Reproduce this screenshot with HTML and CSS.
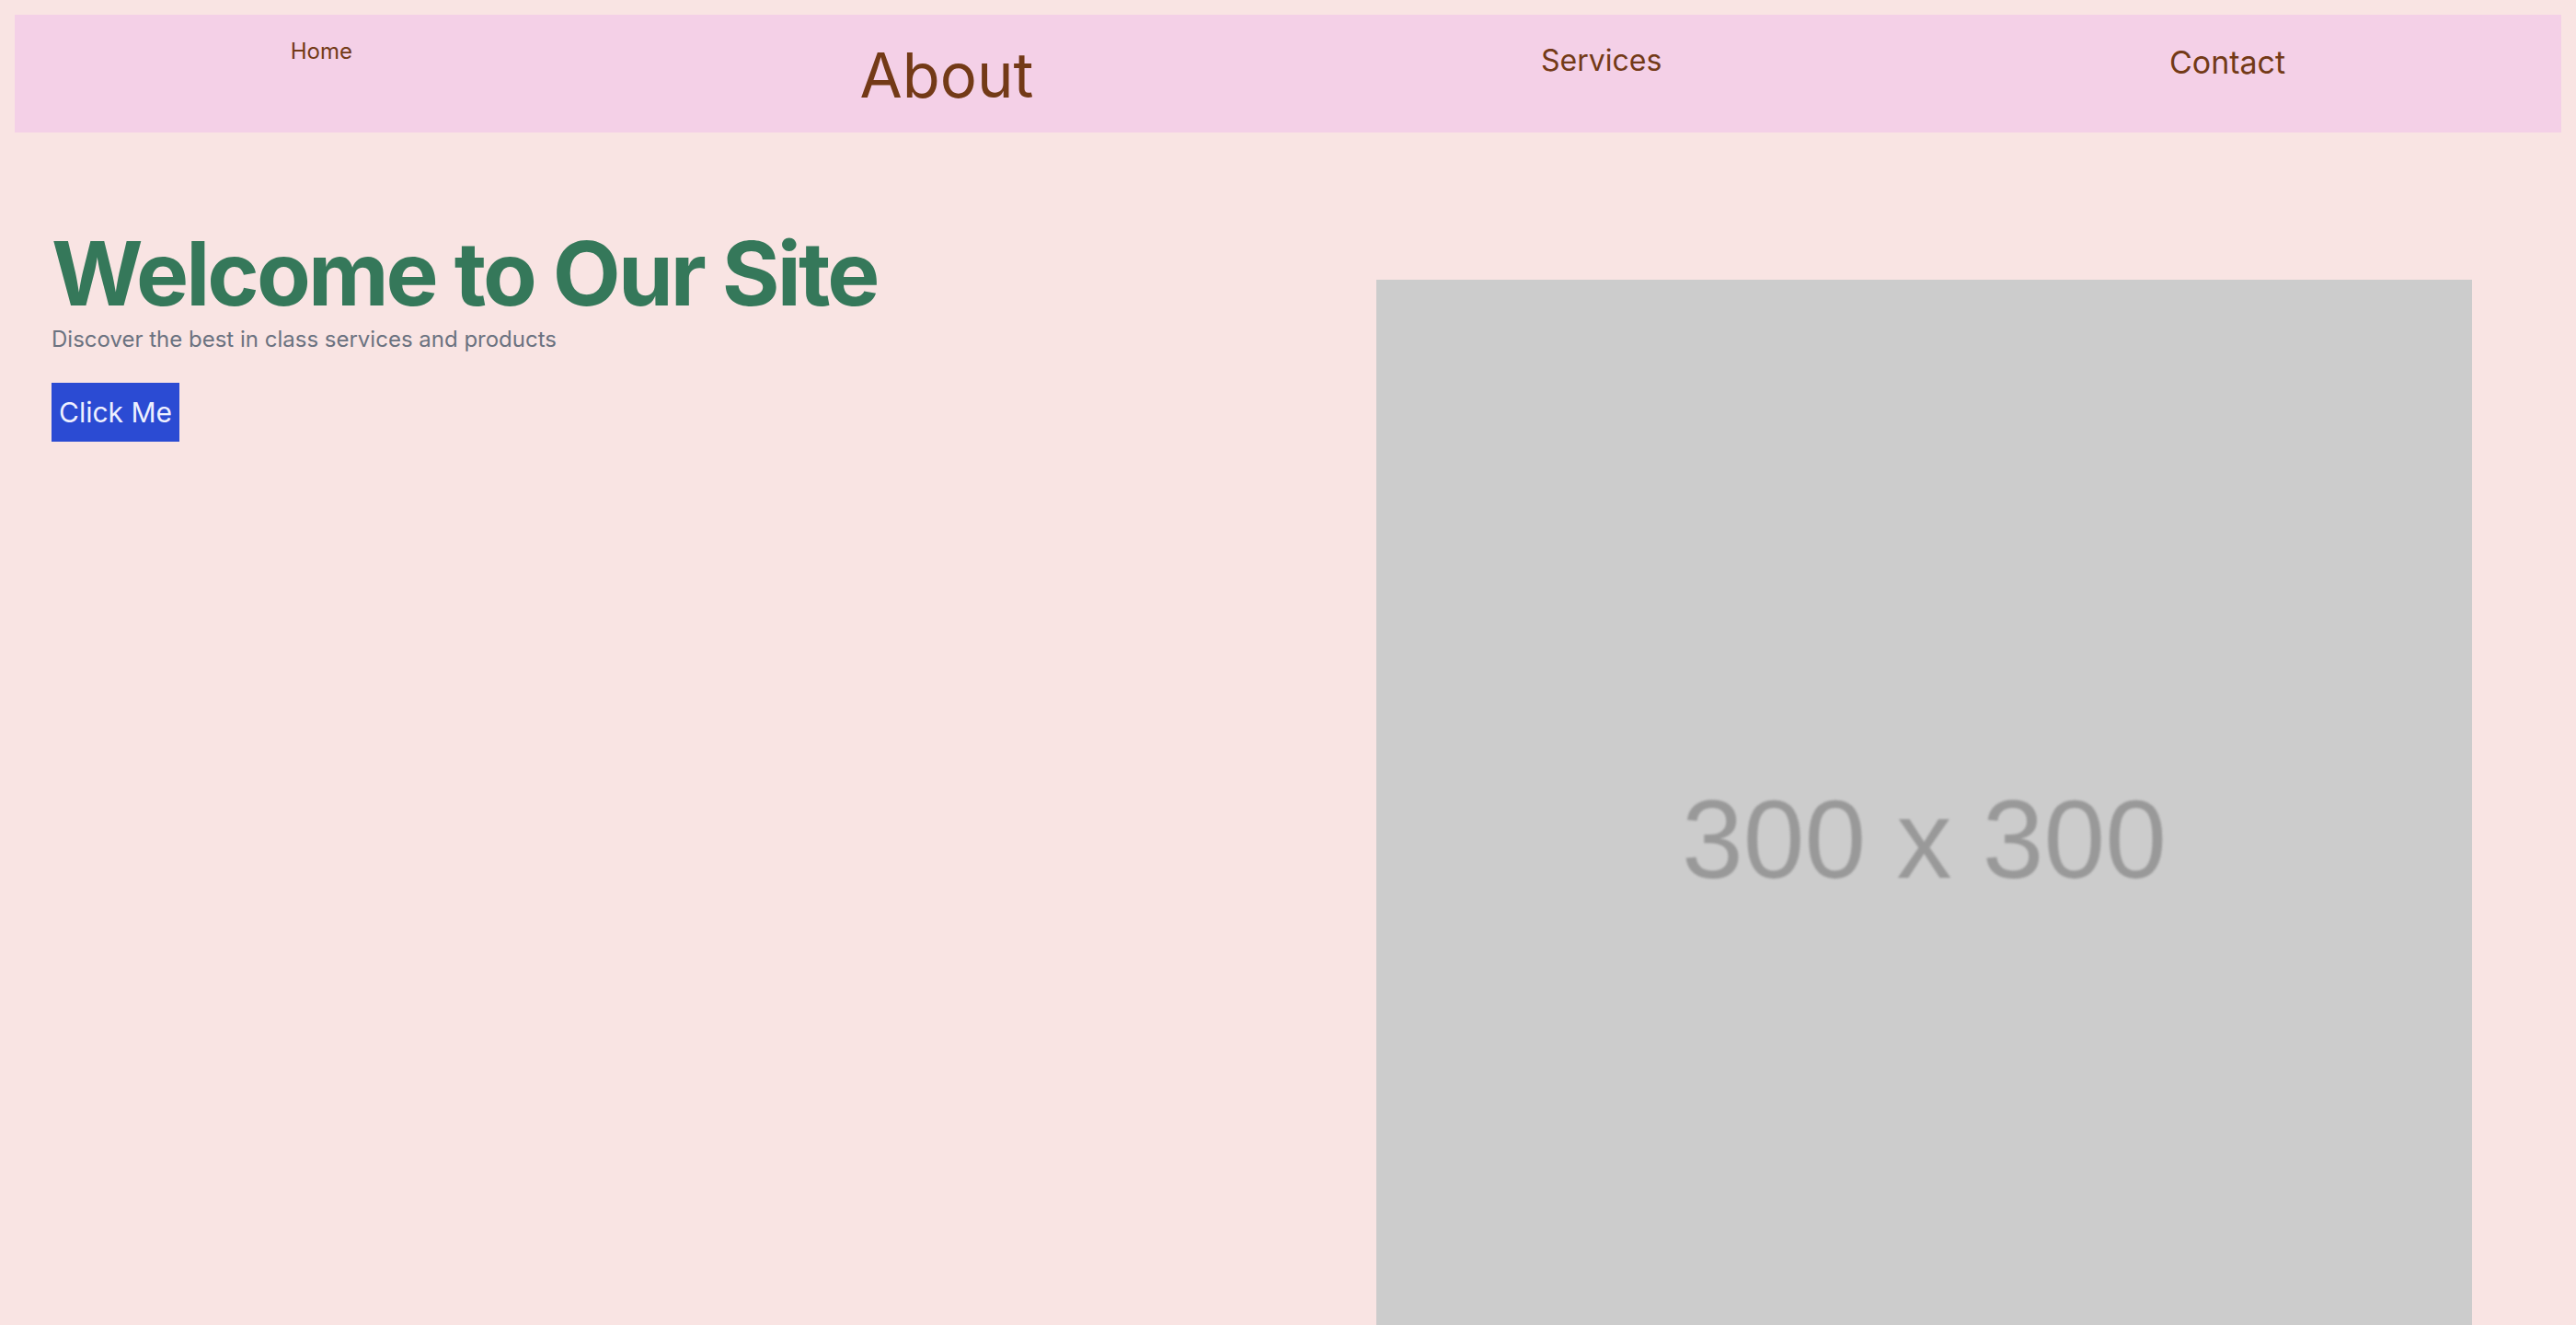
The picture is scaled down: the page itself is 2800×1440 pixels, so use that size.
FILE: index.html
```html
<!DOCTYPE html>
<html lang="en">
<head>
<meta charset="utf-8">
<title>Welcome</title>
<link rel="stylesheet" href="styles.css">
</head>
<body>
  <nav class="nav">
    <a class="nav-link nav-home" href="#">Home</a>
    <a class="nav-link nav-about" href="#">About</a>
    <a class="nav-link nav-services" href="#">Services</a>
    <a class="nav-link nav-contact" href="#">Contact</a>
  </nav>
  <main class="hero">
    <div class="hero-text">
      <h1 class="hero-title">Welcome to Our Site</h1>
      <p class="hero-sub">Discover the best in class services and products</p>
      <button class="hero-btn" type="button">Click Me</button>
    </div>
    <div class="hero-image">
      <span class="hero-image-label">300 x 300</span>
    </div>
  </main>
</body>
</html>
```

FILE: styles.css
```css
html, body {
  background: #f9e4e3;
}
body {
  margin: 16px;
  font-family: Inter, "Noto Sans", sans-serif;
}
.nav {
  display: flex;
  justify-content: space-around;
  align-items: flex-start;
  height: 128px;
  padding: 0 24px;
  background: #f4d0e7;
  box-sizing: border-box;
}
.nav-link {
  color: #733a17;
  text-decoration: none;
  line-height: 1.21;
}
.nav-home {
  font-size: 24px;
  padding-top: 25px;
}
.nav-about {
  font-size: 67px;
  padding-top: 25px;
}
.nav-services {
  font-size: 32px;
  padding-top: 31px;
}
.nav-contact {
  font-size: 34px;
  padding-top: 31px;
}
.hero {
  display: flex;
  justify-content: space-between;
  align-items: flex-start;
  padding: 105px 97px 0 40px;
}
.hero-text {
  display: flex;
  flex-direction: column;
  align-items: flex-start;
}
.hero-title {
  margin: 0;
  font-size: 96px;
  line-height: 1;
  font-weight: 700;
  color: #35785a;
  letter-spacing: -2.9px;
}
.hero-sub {
  margin: 8px 0 0;
  font-size: 24px;
  line-height: 32px;
  color: #6b7280;
}
.hero-btn {
  margin-top: 31px;
  padding: 14px 8px;
  border: none;
  background: #2b4bd3;
  color: #eef0ff;
  font-family: Inter, "Noto Sans", sans-serif;
  font-size: 30px;
  line-height: 36px;
  cursor: pointer;
}
.hero-image {
  flex: 0 0 auto;
  width: 1191px;
  height: 1191px;
  margin-top: 55px;
  background: #cccccc;
  display: flex;
  align-items: center;
  justify-content: center;
  box-sizing: border-box;
  padding-top: 25px;
}
.hero-image-label {
  font-family: "Liberation Sans", Arial, sans-serif;
  font-size: 120px;
  color: #999999;
  filter: blur(1px);
}
```
